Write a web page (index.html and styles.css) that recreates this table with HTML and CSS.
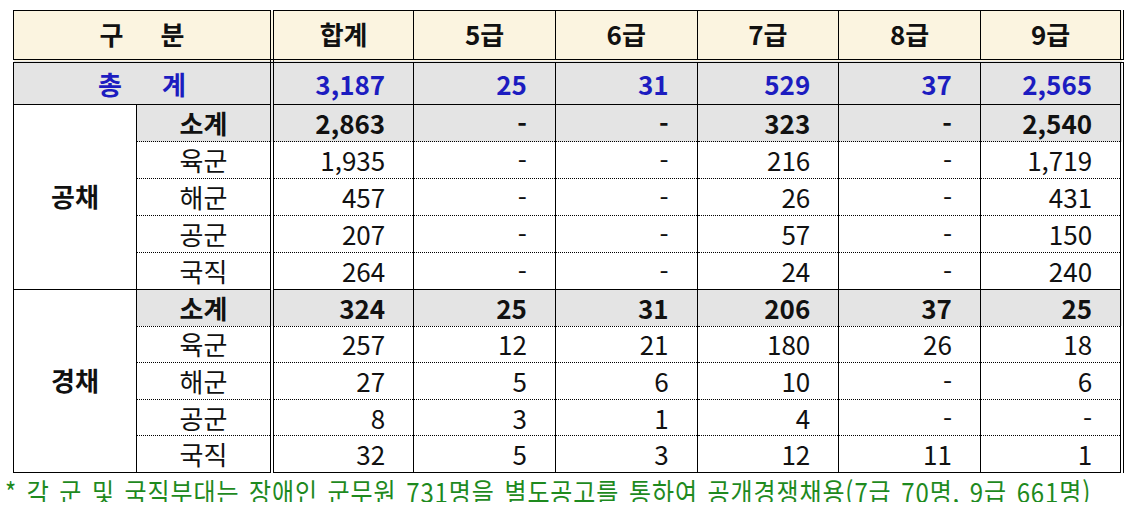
FILE: index.html
```html
<!DOCTYPE html>
<html lang="ko">
<head>
<meta charset="utf-8">
<link rel="stylesheet" href="styles.css">
</head>
<body>
<table class="grid">
  <colgroup>
    <col class="c1"><col class="c2"><col class="cn"><col class="cn"><col class="cn"><col class="cn"><col class="cn"><col class="cn">
  </colgroup>
  <tr class="head">
    <th colspan="2" class="sep"><span class="sp1">구</span><span>분</span></th>
    <th>합계</th><th>5급</th><th>6급</th><th>7급</th><th>8급</th><th>9급</th>
  </tr>
  <tr class="total">
    <td colspan="2" class="sep lab"><span class="sp2">총</span><span>계</span></td>
    <td>3,187</td><td>25</td><td>31</td><td>529</td><td>37</td><td>2,565</td>
  </tr>
  <tr class="sub grp">
    <td rowspan="5" class="cat">공채</td>
    <td class="sep lab">소계</td>
    <td>2,863</td><td>-</td><td>-</td><td>323</td><td>-</td><td>2,540</td>
  </tr>
  <tr><td class="sep lab">육군</td><td>1,935</td><td>-</td><td>-</td><td>216</td><td>-</td><td>1,719</td></tr>
  <tr><td class="sep lab">해군</td><td>457</td><td>-</td><td>-</td><td>26</td><td>-</td><td>431</td></tr>
  <tr><td class="sep lab">공군</td><td>207</td><td>-</td><td>-</td><td>57</td><td>-</td><td>150</td></tr>
  <tr><td class="sep lab">국직</td><td>264</td><td>-</td><td>-</td><td>24</td><td>-</td><td>240</td></tr>
  <tr class="sub grp r2">
    <td rowspan="5" class="cat">경채</td>
    <td class="sep lab">소계</td>
    <td>324</td><td>25</td><td>31</td><td>206</td><td>37</td><td>25</td>
  </tr>
  <tr class="r2"><td class="sep lab">육군</td><td>257</td><td>12</td><td>21</td><td>180</td><td>26</td><td>18</td></tr>
  <tr class="r2"><td class="sep lab">해군</td><td>27</td><td>5</td><td>6</td><td>10</td><td>-</td><td>6</td></tr>
  <tr class="r2"><td class="sep lab">공군</td><td>8</td><td>3</td><td>1</td><td>4</td><td>-</td><td>-</td></tr>
  <tr class="r2"><td class="sep lab">국직</td><td>32</td><td>5</td><td>3</td><td>12</td><td>11</td><td>1</td></tr>
</table>
<p class="note">* 각 군 및 국직부대는 장애인 군무원 731명을 별도공고를 통하여 공개경쟁채용(7급 70명, 9급 661명)</p>
</body>
</html>
```
FILE: styles.css
```css
html, body {
  margin: 0;
  padding: 0;
  background: #ffffff;
}
body {
  font-family: "Noto Sans CJK KR", "Noto Sans", sans-serif;
  color: #111111;
}
.grid {
  margin: 10px 0 0 13px;
  border-collapse: collapse;
  table-layout: fixed;
  width: 1111px;
  border-top: 1px solid #000;
  border-left: 1px solid #000;
  border-bottom: 1px solid #000;
  border-right: 4px double #000;
  font-size: 26px;
  line-height: 1;
}
.c1 { width: 123px; }
.c2 { width: 135.5px; }
.cn { width: 141.7px; }
.grid th, .grid td {
  padding: 0 28px 0 0;
  border-left: 1px solid #000;
  border-right: 1px solid #000;
  border-top: 1px dotted #000;
  border-bottom: 1px dotted #000;
  text-align: right;
  vertical-align: middle;
  white-space: nowrap;
}
.grid .sep { border-right: 4px double #000; }
.grid .lab { text-align: center; padding: 0; }
.head th {
  height: 46px;
  background: #fbf4e0;
  font-weight: 700;
  text-align: center;
  padding: 0 0 2px 0;
  border-top: 1px solid #000;
  border-bottom: 4px double #000;
}
.total td {
  height: 41px;
  background: #e4e4e4;
  color: #1c1cc0;
  font-weight: 700;
  border-bottom: 1px solid #000;
}
.sp1 { margin-right: 37px; }
.sp2 { margin-right: 40px; }
.grid tr { height: 37px; }
.grid .r2 { height: 36.6px; }
.sub td { background: #e4e4e4; font-weight: 700; }
.grid .grp td { border-top: 1px solid #000; }
.grid td.cat {
  background: #ffffff;
  text-align: center;
  padding: 0 0 2px 0;
  font-weight: 700;
  border-bottom: 1px solid #000;
}
.note {
  margin: 5px 0 0 5px;
  font-size: 24px;
  line-height: 1;
  color: #1e8a1e;
  white-space: nowrap;
  letter-spacing: 0.9px;
  word-spacing: 2px;
  transform: scaleY(1.15);
  transform-origin: 0 0;
}
```
